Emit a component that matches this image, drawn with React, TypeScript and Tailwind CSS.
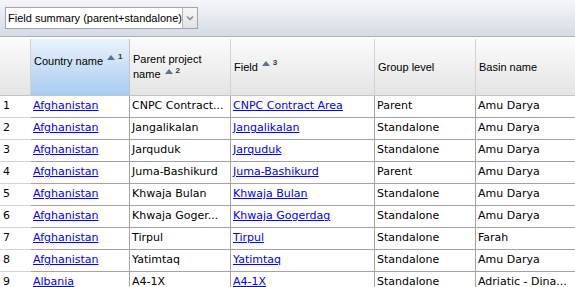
import React from 'react';

type Row = {
  country: string;
  parent: string;
  field: string;
  level: string;
  basin: string;
};

const rows: Row[] = [
  { country: 'Afghanistan', parent: 'CNPC Contract...', field: 'CNPC Contract Area', level: 'Parent', basin: 'Amu Darya' },
  { country: 'Afghanistan', parent: 'Jangalikalan', field: 'Jangalikalan', level: 'Standalone', basin: 'Amu Darya' },
  { country: 'Afghanistan', parent: 'Jarquduk', field: 'Jarquduk', level: 'Standalone', basin: 'Amu Darya' },
  { country: 'Afghanistan', parent: 'Juma-Bashikurd', field: 'Juma-Bashikurd', level: 'Parent', basin: 'Amu Darya' },
  { country: 'Afghanistan', parent: 'Khwaja Bulan', field: 'Khwaja Bulan', level: 'Standalone', basin: 'Amu Darya' },
  { country: 'Afghanistan', parent: 'Khwaja Goger...', field: 'Khwaja Gogerdag', level: 'Standalone', basin: 'Amu Darya' },
  { country: 'Afghanistan', parent: 'Tirpul', field: 'Tirpul', level: 'Standalone', basin: 'Farah' },
  { country: 'Afghanistan', parent: 'Yatimtaq', field: 'Yatimtaq', level: 'Standalone', basin: 'Amu Darya' },
  { country: 'Albania', parent: 'A4-1X', field: 'A4-1X', level: 'Standalone', basin: 'Adriatic - Dina...' },
];

// sort marker: small triangle + superscript order number
const SortMark = ({ n }: { n: number }) => (
  <span className="relative top-[-4px] inline-flex items-start ml-[4px]">
    <svg width="8" height="5" viewBox="0 0 8 5" className="mt-[2px]">
      <path d="M0 5 L4 0 L8 5 Z" fill="#5b7290" />
    </svg>
    <span className="ml-[3px] text-[8px] leading-[8px] font-bold text-[#333]">{n}</span>
  </span>
);

const headCell =
  'flex items-center pl-[3px] border-r border-[#d2d2d2] bg-gradient-to-b from-[#fbfbfb] to-[#e4e4e4] overflow-hidden';
const bodyCell =
  'h-[22px] flex items-center pl-[2px] border-r border-b border-[#a3a3a3] whitespace-nowrap overflow-hidden';
const linkCls = 'text-[#0000ff] underline';

export default function App() {
  return (
    <div
      className="w-[575px] h-[287px] overflow-hidden bg-white text-black"
      style={{ fontFamily: '"DejaVu Sans", Verdana, sans-serif' }}
    >
      {/* Toolbar */}
      <div className="h-[37px] flex items-center pl-[5px] bg-gradient-to-b from-[#f4f6f9] to-[#d5dbe4] border-b border-[#a9b0ba]">
        <div className="flex h-[22px] w-[193px] border border-[#9ea4ab] bg-white">
          <span
            className="flex-1 flex items-center pl-[2px] text-[11px] text-black whitespace-nowrap"
            style={{ fontFamily: '"Liberation Sans", Arial, sans-serif' }}
          >
            Field summary (parent+standalone)
          </span>
          <span className="w-[16px] flex items-center justify-center border-l border-[#b4b9bf] bg-gradient-to-b from-[#f7f7f7] to-[#e2e2e2]">
            <svg width="8" height="6" viewBox="0 0 8 6">
              <path d="M1 1.5 L4 4.5 L7 1.5" stroke="#8a8f96" strokeWidth="1.6" fill="none" />
            </svg>
          </span>
        </div>
      </div>

      {/* Grid */}
      <div className="mt-[2px] grid grid-cols-[31px_99px_101px_144px_101px_110px]">
        {/* header */}
        <div
          className="contents text-[11px] text-black"
          style={{ fontFamily: '"Liberation Sans", Arial, sans-serif' }}
        >
          <div className={`${headCell} h-[57px] border-b border-b-[#c4c4c4]`} />
          <div className="h-[57px] flex items-center pl-[3px] pb-[12px] border-r border-b border-[#c4c4c4] bg-gradient-to-b from-[#eaf3fc] to-[#a7cbf0] whitespace-nowrap">
            Country name
            <SortMark n={1} />
          </div>
          <div className={`${headCell} h-[57px] border-b border-b-[#c4c4c4] leading-[15px]`}>
            <div>
              Parent project
              <br />
              name
              <SortMark n={2} />
            </div>
          </div>
          <div className={`${headCell} h-[57px] border-b border-b-[#c4c4c4] whitespace-nowrap`}>
            Field
            <SortMark n={3} />
          </div>
          <div className={`${headCell} h-[57px] border-b border-b-[#c4c4c4]`}>Group level</div>
          <div className={`${headCell} h-[57px] border-b border-b-[#c4c4c4]`}>Basin name</div>
        </div>

        {/* body */}
        {rows.map((r, i) => (
          <div key={i} className="contents text-[11px]">
            <div className="h-[22px] flex items-center pl-[3px] border-b border-[#d4d4d4]">{i + 1}</div>
            <div className={bodyCell}>
              <span className={linkCls}>{r.country}</span>
            </div>
            <div className={bodyCell}>{r.parent}</div>
            <div className={bodyCell}>
              <span className={linkCls}>{r.field}</span>
            </div>
            <div className={bodyCell}>{r.level}</div>
            <div className={bodyCell}>{r.basin}</div>
          </div>
        ))}
      </div>
    </div>
  );
}
